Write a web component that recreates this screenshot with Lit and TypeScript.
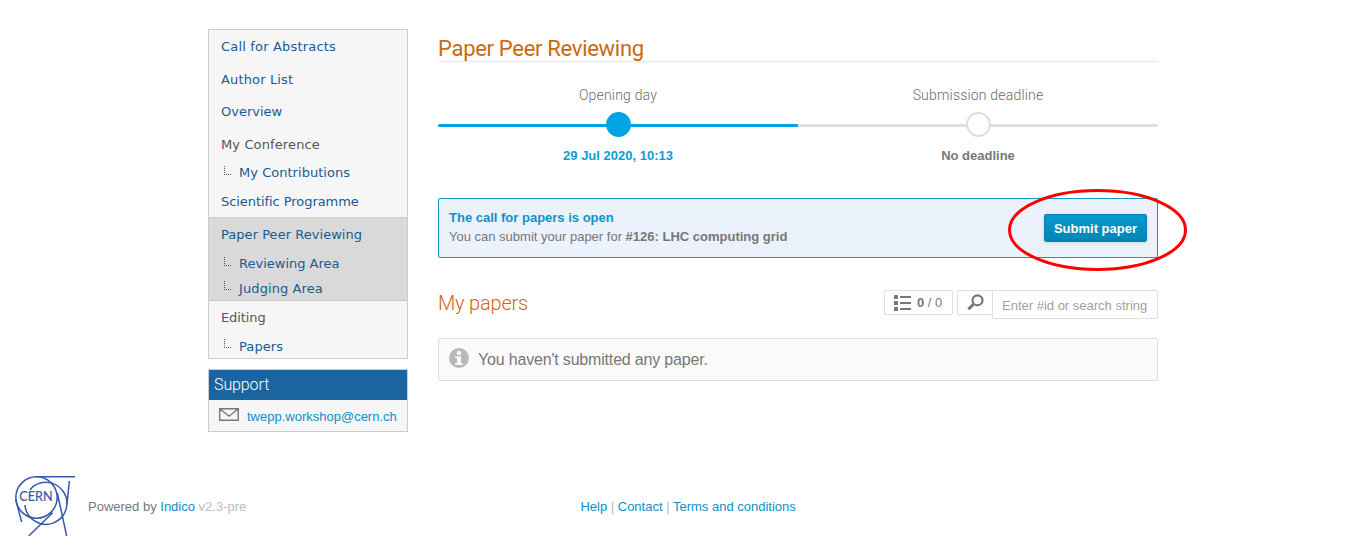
import { LitElement, html, css, svg } from "lit";
import { customElement } from "lit/decorators.js";
import { classMap } from "lit/directives/class-map.js";

interface Row { label: string; h: number; plain?: boolean; sub?: boolean; track?: number; }

const TOP: Row[] = [
  { label: "Call for Abstracts", h: 33, track: 0.18 },
  { label: "Author List", h: 32, track: 0.15 },
  { label: "Overview", h: 33 },
  { label: "My Conference", h: 32, plain: true, track: 0.12 },
  { label: "My Contributions", h: 25, sub: true, track: 0.03 },
  { label: "Scientific Programme", h: 32, track: -0.06 },
];
const ACTIVE: Row[] = [
  { label: "Paper Peer Reviewing", h: 33, track: 0.04 },
  { label: "Reviewing Area", h: 25, sub: true },
  { label: "Judging Area", h: 24, sub: true, track: 0.1 },
];
const BOTTOM: Row[] = [
  { label: "Editing", h: 33, plain: true, track: -0.1 },
  { label: "Papers", h: 24, sub: true, track: 0.1 },
];

@customElement("side-menu")
class SideMenu extends LitElement {
  static styles = css`
    :host { display: block; }
    .menu { box-sizing: border-box; width: 200px; border: 1px solid #ccc; background: #f6f6f6;
      font: 13px "DejaVu Sans", Verdana, sans-serif; color: #1a5a93; }
    .active { background: #d9d9d9; border-top: 1px solid #ccc; border-bottom: 1px solid #ccc; }
    .row { display: flex; align-items: center; padding-left: 12px; white-space: nowrap; }
    .plain { color: #555; }
    .sub { padding-left: 15px; }
    .elbow { width: 7px; height: 9px; margin: -5px 8px 0 0; flex: none; }
    .support { box-sizing: border-box; width: 200px; margin-top: 10px; border: 1px solid #ccc;
      background: #f6f6f6; font: 13px/31px "Liberation Sans", Arial, sans-serif; color: #0c8fc7; }
    .title { background: #1a64a0; color: #fff; font: 300 16px/30px Roboto, sans-serif; letter-spacing: -.1px; padding-left: 5px; height: 30px; }
    .mail { display: flex; align-items: center; height: 31px; padding-left: 10px; gap: 8px; }
    .mail svg { margin-top: -3px; }
    .mail span { padding-top: 1px; }
  `;
  row(r: Row) {
    return html`<div class=${classMap({ row: true, plain: !!r.plain, sub: !!r.sub })} style="height:${r.h}px;letter-spacing:${r.track ?? 0}px">
      ${r.sub ? html`<svg class="elbow" viewBox="0 0 7 9" shape-rendering="crispEdges"><path d="M.5 0v9M0 8.5h7" fill="none" stroke="#555" stroke-dasharray="1 1"/></svg>` : ""}<span>${r.label}</span></div>`;
  }
  render() {
    return html`<nav class="menu">
        ${TOP.map((r) => this.row(r))}
        <div class="active">${ACTIVE.map((r) => this.row(r))}</div>
        ${BOTTOM.map((r) => this.row(r))}
      </nav>
      <section class="support">
        <div class="title">Support</div>
        <div class="mail">
          <svg width="20" height="13" viewBox="0 0 20 13"><path d="M.75.75h18.5v11.5H.75zM1 1l9 7.2L19 1" fill="none" stroke="#777" stroke-width="1.4"/></svg>
          <span>twepp.workshop@cern.ch</span>
        </div>
      </section>`;
  }
}

@customElement("paper-timeline")
class PaperTimeline extends LitElement {
  static styles = css`
    :host { display: grid; grid-template-columns: 1fr 1fr; text-align: center; color: #777;
      font: 13px "Liberation Sans", Arial, sans-serif; }
    .label { font: 300 14px/18px Roboto, sans-serif; height: 26px; letter-spacing: .19px; color: #6c6c6c; }
    .track { height: 25px; display: grid; place-items: center; }
    .track > * { grid-area: 1 / 1; }
    .line { width: 100%; height: 3px; background: #dedede; margin-top: 2px; border-radius: 0 2px 2px 0; }
    .dot { box-sizing: border-box; width: 25px; height: 25px; border-radius: 50%; border: 2px solid #dedede; background: #fff; }
    .done .line { background: #00a4e4; border-radius: 2px 0 0 2px; }
    .done .dot { background: #00a4e4; border-color: #00a4e4; }
    .date { font-weight: bold; line-height: 16px; margin-top: 11px; }
    .done .date { color: #0f9bd7; }
  `;
  render() {
    return html`
      <div class="done"><div class="label">Opening day</div><div class="track"><div class="line"></div><div class="dot"></div></div><div class="date">29 Jul 2020, 10:13</div></div>
      <div><div class="label">Submission deadline</div><div class="track"><div class="line"></div><div class="dot"></div></div><div class="date">No deadline</div></div>`;
  }
}

const cernLogo = svg`
  <g fill="none" stroke="#3459a8" stroke-width="4.500">
    <circle cx="109.500" cy="97.500" r="62"/>
    <path d="M90 74A63 63 0 1 1 75 120"/>
    <path d="M109 35.500H225M208 48L201 118M172 84L200 213M158 143L86 213M47 103L65 171"/>
  </g>
  <text class="cern" x="58" y="109" textLength="100" lengthAdjust="spacingAndGlyphs">CERN</text>`;

@customElement("app-root")
class AppRoot extends LitElement {
  static styles = css`
    :host { display: block; position: relative; height: 554px; overflow: hidden; background: #fff;
      font: 13px "Liberation Sans", Arial, sans-serif; color: #777; }
    .page { display: flex; gap: 30px; padding: 29px 0 0 208px; height: 447px; box-sizing: border-box; }
    main { width: 720px; }
    h1 { margin: 0 0 24px; height: 32px; border-bottom: 1px solid #e6e6e6; color: #c96a0c;
      font: 400 22px/39px Roboto, sans-serif; letter-spacing: -.3px; }
    .call { box-sizing: border-box; height: 60px; margin-top: 34px; border: 1px solid #0c9bcb; border-radius: 2px;
      background: #ebf2fc; display: flex; justify-content: space-between; align-items: center; padding: 0 10px; line-height: 19px; }
    .message { padding-bottom: 2px; }
    .call .open { font-weight: bold; color: #0c94c8; }
    .submit { box-sizing: border-box; width: 103px; height: 28px; border: 1px solid #0881ae; border-radius: 2px; padding: 0;
      background: linear-gradient(#0499cd, #0485b3); color: #fff; font: bold 13px "Liberation Sans", Arial, sans-serif;
      box-shadow: 0 1px 4px rgba(0,0,0,.12); }
    .bar { display: flex; align-items: flex-start; margin-top: 32px; height: 48px; }
    h2 { margin: 0; flex: 1; font: 300 20px/26px Roboto, sans-serif; letter-spacing: -.2px; color: #cb6715; }
    .box { box-sizing: border-box; height: 25px; border: 1px solid #ddd; border-radius: 2px; display: flex; align-items: center; }
    .count { width: 69px; padding-left: 9px; gap: 6px; margin-right: 4px; white-space: nowrap; }
    .find { width: 35px; border-right: 0; border-radius: 2px 0 0 2px; padding-left: 9px; }
    .entry { width: 166px; height: 29px; padding: 2px 0 0 9px; color: #a0a0a0; border-radius: 0 2px 2px 0; white-space: nowrap; }
    .empty { box-sizing: border-box; height: 43px; border: 1px solid #ddd; border-radius: 2px; background: #fafafa;
      display: flex; align-items: center; padding-left: 10px; gap: 9px; font-size: 16px; letter-spacing: -.18px; }
    .empty svg { margin-top: -3px; }
    footer { display: flex; margin-top: 29px; padding-left: 15px; }
    .powered { width: 492px; padding: 23px 0 0 13px; box-sizing: border-box; }
    .links { padding-top: 23px; color: #bbb; white-space: nowrap; margin-left: 13.400px; }
    a { color: #0c8fc7; }
    .ver { color: #bbb; }
    .cern { font: 40px Lato, sans-serif; fill: #3459a8; stroke: #3459a8; stroke-width: .6; }
    .ring { position: absolute; left: 1008px; top: 189px; width: 179px; height: 82px; }
  `;
  render() {
    return html`
      <div class="page">
        <side-menu></side-menu>
        <main>
          <h1>Paper Peer Reviewing</h1>
          <paper-timeline></paper-timeline>
          <div class="call">
            <div class="message"><div class="open">The call for papers is open</div><div>You can submit your paper for <b>#126: LHC computing grid</b></div></div>
            <button class="submit">Submit paper</button>
          </div>
          <div class="bar">
            <h2>My papers</h2>
            <div class="box count"><svg width="17" height="16" viewBox="0 0 17 16"><path d="M0 0h4v4H0zM0 6h4v4H0zM0 12h4v4H0zM6 1h11v2H6zM6 7h11v2H6zM6 13h11v2H6z" fill="#777"/></svg><span><b>0</b> / 0</span></div>
            <div class="box find"><svg width="17" height="17" viewBox="0 0 17 17"><circle cx="10.500" cy="6.300" r="5" fill="none" stroke="#777" stroke-width="2.200"/><path d="M6.500 10.200L1.300 15.300" stroke="#777" stroke-width="3"/></svg></div>
            <div class="box entry">Enter #id or search string</div>
          </div>
          <div class="empty"><svg width="20" height="20" viewBox="0 0 20 20"><circle cx="10" cy="10" r="10" fill="#b8b8b8"/><circle cx="10" cy="5" r="2.300" fill="#fafafa"/><path d="M6 8.300h6v7h1.800V17H6v-1.700h2V10H6z" fill="#fafafa"/></svg><span>You haven't submitted any paper.</span></div>
        </main>
      </div>
      <footer>
        <svg width="60" height="60" viewBox="45 33 180 180">${cernLogo}</svg>
        <div class="powered">Powered by <a>Indico</a> <span class="ver">v2.3-pre</span></div>
        <div class="links"><a>Help</a> | <a>Contact</a> | <a>Terms and conditions</a></div>
      </footer>
      <svg class="ring" viewBox="0 0 179 82"><ellipse cx="89.500" cy="41" rx="88" ry="39.500" fill="none" stroke="#f00" stroke-width="3"/></svg>`;
  }
}
